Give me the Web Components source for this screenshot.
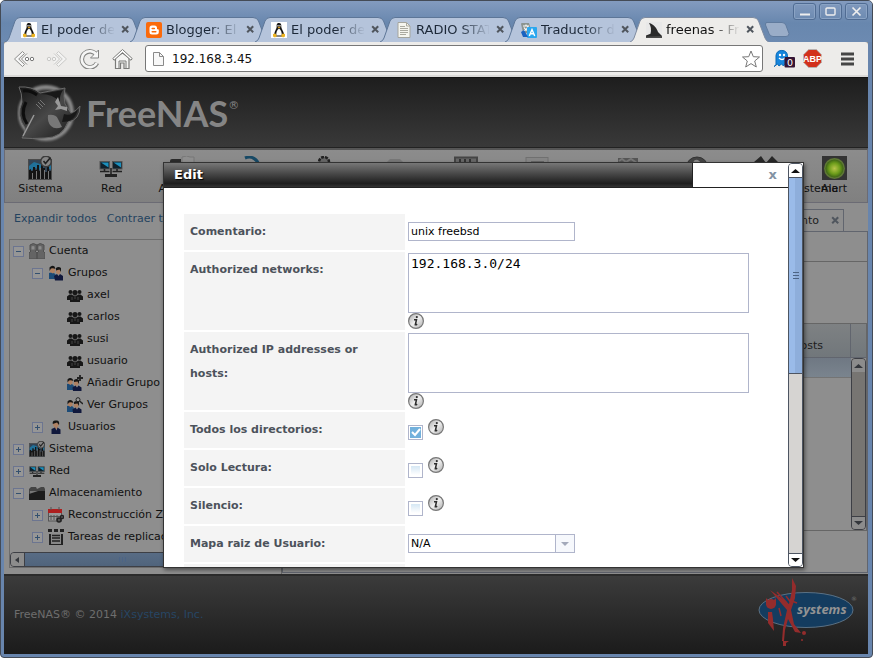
<!DOCTYPE html>
<html lang="es">
<head>
<meta charset="utf-8">
<title>freenas - FreeNAS</title>
<style>
html,body{margin:0;height:100%}
body{font:11px/14px "DejaVu Sans",sans-serif;color:#111;background:#fff}
</style>
</head>
<body>
<desktop-window></desktop-window>
<script>
const ICONS={
tux:'<rect width="16" height="16" fill="#fff"/><path d="M8 1C5.600 1 5.500 3 5.700 5 5.500 7 3.500 9 3.300 12L5 14.500h6l2-2.500C12.500 9 10.500 7 10.300 5 10.500 2.500 10 1 8 1z" fill="#151515"/><path d="M8 6.500C6 8 5 10 5.300 13.500h5.400C11 10 10 8 8 6.500z" fill="#fff"/><path d="M6.300 4.700h3.400L8 6.500z" fill="#f0a818"/><circle cx="7" cy="3.800" r=".7" fill="#fff"/><circle cx="9" cy="3.800" r=".7" fill="#fff"/><path d="M2 12l2.500-.5L6 14l-2 1.500-2-1zM14 12l-2.500-.5L10 14l2 1.500 2-1z" fill="#eeb41f"/>',
blogger:'<rect width="16" height="16" rx="2" fill="#fb6a0a"/><path d="M6 3.500h2.500a2.500 2.500 0 0 1 2.500 2.500v.7q.2.600 1 .6.800.2.800 1v1.700a2.500 2.500 0 0 1-2.500 2.500H6A2.500 2.500 0 0 1 3.500 10V6A2.500 2.500 0 0 1 6 3.500z" fill="#fff"/><path d="M6.200 6.400h2.200M6.200 9.700h3.600" stroke="#fb6a0a" stroke-width="1.500" stroke-linecap="round"/>',
doc:'<path d="M2 .5h8.500L14 4v11.500H2z" fill="#f5f5ee" stroke="#a5a59d"/><path d="M10.500.5V4H14M4 4.500h5M4 6.500h8M4 8.500h8M4 10.500h8M4 12.500h6" fill="none" stroke="#aaa99f"/>',
translate:'<path d="M0 2q0-1 1-1h7l3 10H2z" fill="#8b9490"/><path d="M2 4h6M5 2.500V4M7 4C6.500 7 4 8.500 2.500 9M3 5.500C4 7.500 6 8.500 7.500 9" fill="none" stroke="#fff" stroke-width="1.100"/><rect x="6" y="5" width="10" height="11" rx="1" fill="#2aa7ef"/><path d="M0 10l3-2 4 7H2z" fill="#1a62c0"/><path d="M8.300 14L11 7.500l2.700 6.500M9.200 11.800h3.600" fill="none" stroke="#fff" stroke-width="1.400"/>',
fin:'<rect width="16" height="16" fill="#e8e8e8"/><path d="M3 1c5 1 8 6 9 9l4 4v2H0V13.500l4.500-1.700C5.500 8 5 4 3 1z" fill="#2a2a2a"/><path d="M0 14.500l16-.5v2H0z" fill="#484848"/>',
page:'<path d="M2.500 1.500h6l4 4v9h-10z" fill="#f8f8f8" stroke="#8a8a8a"/><path d="M8.500 1.500v4h4" fill="none" stroke="#8a8a8a"/>',
back:'<path d="M9.500 2.500L1.500 10l8 7.500 2-2L5.700 10l5.800-5.500zM14 4.500L8.500 10l5.500 5.500" fill="#f8f8f8" stroke="#8d8d8b"/><circle cx="14" cy="10" r="1.700" fill="#fff" stroke="#777"/><circle cx="19" cy="10" r="1.700" fill="#fff" stroke="#777"/>',
fwd:'<path d="M12.500 2.500l8 7.500-8 7.500-2-2 5.800-5.500-5.800-5.500zM8 4.500l5.500 5.500L8 15.500" fill="#f3f3f2" stroke="#c9c9c7"/><circle cx="8" cy="10" r="1.700" fill="#f3f3f2" stroke="#c9c9c7"/><circle cx="3" cy="10" r="1.700" fill="#f3f3f2" stroke="#c9c9c7"/>',
reload:'<path d="M17.500 6A8 8 0 1 0 18 14" fill="none" stroke="#858583" stroke-width="4.600"/><path d="M19.500 1v8h-8z" fill="#f8f8f8" stroke="#858583"/><path d="M17.500 6A8 8 0 1 0 17.800 14" fill="none" stroke="#f6f6f5" stroke-width="2.600"/>',
home:'<path d="M3.500 10v10.500h5V15h3.500v5.500h5V10L10.500 5z" fill="#f4f4f3" stroke="#7a7a78" stroke-width="1.200"/><path d="M.8 10.500L10.500 1.500 20.200 10.500 19 12.300l-8.500-7.800L2 12.300z" fill="#fff" stroke="#7a7a78"/><path d="M7 20v-7h7v7" fill="none" stroke="#7a7a78"/>',
star:'<path d="M9 1l2.300 5.700 6.200.3-4.800 4 1.600 6L9 13.600 3.700 17l1.600-6-4.800-4 6.200-.3z" fill="#fff" stroke="#777" stroke-linejoin="round"/>',
ghost:'<path d="M2 16V6.500a5.800 5.800 0 0 1 11.500 0V16l-2-1.500L9.500 17l-2-2L5 17l-1.500-2L0 17.500z" fill="#1686dd" stroke="#0869b7"/><circle cx="6" cy="6" r="1.200" fill="#fff"/><circle cx="10" cy="6" r="1.200" fill="#fff"/><path d="M5 9q3 3 6 0" fill="none" stroke="#fff" stroke-width="1.300"/><rect x="10.500" y="8" width="10.500" height="10.500" rx="1" fill="#351535"/><text x="13" y="17" font-size="9.500" fill="#fff" font-family="DejaVu Sans">0</text>',
abp:'<path d="M5.700.5h7.600l5.200 5.200v7.600l-5.200 5.200H5.700L.5 13.300V5.700z" fill="#d2301c" stroke="#b9b2b0"/><text x="9.500" y="13" text-anchor="middle" font-size="9" font-weight="700" fill="#fff" font-family="Liberation Sans">ABP</text>',
menu:'<path d="M1 2h13M1 7h13M1 12h13" stroke="#454545" stroke-width="3"/>',
min:'<path d="M6 10.500h10" stroke="#eee" stroke-width="2"/>',
max:'<rect x="6" y="4" width="9" height="7" rx="1" fill="none" stroke="#eee" stroke-width="1.400"/>',
cls:'<path d="M6.500 3.500l8 8m0-8l-8 8" stroke="#eee" stroke-width="1.700"/>',
x:'<path d="M1.200 1.200l6 6m0-6l-6 6" stroke="#50565e" stroke-width="2"/>',
chart:'<rect x=".5" y="3.500" width="23" height="20" fill="#345" stroke="#4b4b4b"/><path d="M1 10l5-4 6 2 11-4v10l-6-4-5 4-5-2-6 4z" fill="#20719a"/><path d="M1 14v9h22v-8h-2v-6h-2v7h-2v-4h-2v-4h-2v7h-2V9h-2v5H7v-3H5v4H3v-2z" fill="#141414"/><path d="M4.500 17v6M8.500 15v8M12.500 12v11M16.500 14v9M20.500 15v8" stroke="#777"/><circle cx="18" cy="5.500" r="5.300" fill="#858585" stroke="#3c3c3c" stroke-width="1.500"/><path d="M15.500 5l2 2.500 5-6" fill="none" stroke="#222" stroke-width="1.700"/>',
net:'<rect x="1" y="5.500" width="9.500" height="7.500" fill="#10212c" stroke="#555"/><rect x="13.500" y="5.500" width="9.500" height="7.500" fill="#10212c" stroke="#555"/><path d="M2 6.500h7.500v5z" fill="#1c90bd"/><path d="M14.500 6.500H22v5z" fill="#1c90bd"/><path d="M1 15.500h9.500M13.500 15.500H23M5.500 13v2M18 13v2M12 12v6" stroke="#222" stroke-width="1.600"/><rect x="6" y="18" width="12" height="3" fill="#222"/>',
folder:'<path d="M0 5q0-2 2-2h9v3l10-1v19H0z" fill="#2b2b2b"/><path d="M12 6V1q5-2 8 0h4v20H12z" fill="#8e8e8e" stroke="#777"/>',
arrow:'<path d="M4 2c7-3 13 2 14 8" fill="none" stroke="#174965" stroke-width="3"/>',
knob:'<circle cx="12" cy="6" r="5" fill="#666" stroke="#222" stroke-width="2.500" stroke-dasharray="3 1"/>',
pale:'<path d="M4 6l3-3h10l3 3v10H4z" fill="#777"/>',
jail:'<path d="M1 1.500h22V24H1z" fill="#666" stroke="#444" stroke-width="2"/><path d="M6 3v20M11 3v20M16 3v20" stroke="#333" stroke-width="2"/>',
sheet:'<rect x="1" y="1.500" width="22" height="20" fill="#858585" stroke="#707070"/><path d="M6 7h13" stroke="#666" stroke-width="4"/>',
checks:'<path d="M2 2h20v20H2z" fill="#555"/><path d="M3 5l3-2 4 3 5-3 6 4" stroke="#777" fill="none" stroke-width="2"/>',
help:'<circle cx="12" cy="12" r="11" fill="#444" stroke="#333"/><path d="M9 6q4-3 6 2" fill="none" stroke="#888" stroke-width="2"/>',
tools:'<path d="M0 6l7-6 5 7 6-7 6 6-6 9H5z" fill="#282828"/>',
alert:'<defs><radialGradient id="g"><stop stop-color="#b7c44a"/><stop offset=".6" stop-color="#6e9e1b"/><stop offset="1" stop-color="#3c6315"/></radialGradient></defs><rect width="25" height="24" fill="#333"/><circle cx="12.500" cy="12.500" r="10.500" fill="#5e7735"/><circle cx="12.500" cy="12.500" r="9" fill="url(#g)"/>',
pair:'<path d="M1 2q3-3 7 0v5l-2 1 2 2v6H0v-6l2-2-1-1zM8 2q3-3 7 0v5l-1 1 2 2v6H8v-6l2-2-2-1z" fill="#646464" stroke="#505050"/><path d="M2.500 3.500q1.500-1 3 0v3h-3zM9.500 3.500q1.500-1 3 0v3h-3z" fill="#8c8c8c"/>',
duo:'<path d="M1 8l4-1 3 3v4H1z" fill="#1c4b77"/><path d="M2 3q2-2 5 0v4l-2 1.500L2 7zM8 4q2-2 4.500 0v4l-2 1.500L8 8z" fill="#ae8163"/><path d="M1.500 6V2.500Q4-.5 6.500 1.500L7.500 4Q5.500 3 3 3.500zM8 5.500V3Q10.500 1 13 3v4L11.500 4.500z" fill="#151515"/><path d="M6 11l3-2 1.500 2L12 9l3 2v4.500H7z" fill="#10183c"/>',
group:'<circle cx="3.500" cy="5" r="2" fill="#171717"/><circle cx="12.500" cy="5" r="2" fill="#171717"/><circle cx="8" cy="5.500" r="2.600" fill="#171717"/><path d="M0 13V9.500l2.500-2H5l1 1h4l1-1h2.500l2.500 2V13h-3v2H3v-2z" fill="#171717"/><path d="M5 10v3M11 10v3M8 9v3" stroke="#444"/>',
plus:'<path d="M0 9l4-1 3 3v4H0z" fill="#1c4b77"/><path d="M1 5q2-2 4.500 0v3.500L3.500 10 1 8.500zM7 6q2-2 4.500 0v3.500L9.500 11 7 9.500z" fill="#ae8163"/><path d="M.5 7.500V4.500Q3 2 5.500 4l1 2Q4 5 2 5.500zM7 7V5Q9.500 3 12 5v4l-1.500-2.500z" fill="#151515"/><path d="M5.500 12.500l3-2 1.500 2 1.500-2 3 2V16H6z" fill="#10183c"/><path d="M13 0v6M10 3h6" stroke="#222" stroke-width="1.800"/>',
find:'<path d="M0 9l4-1 3 3v4H0z" fill="#1c4b77"/><path d="M1 5q2-2 4.500 0v3.500L3.500 10 1 8.500zM7 6q2-2 4.500 0v3.500L9.500 11 7 9.500z" fill="#ae8163"/><path d="M.5 7.500V4.500Q3 2 5.500 4l1 2Q4 5 2 5.500zM7 7V5Q9.500 3 12 5v4l-1.500-2.500z" fill="#151515"/><path d="M5.500 12.500l3-2 1.500 2 1.500-2 3 2V16H6z" fill="#10183c"/><circle cx="11" cy="2.700" r="2" fill="#999" stroke="#222"/><path d="M12.500 4L16 7" stroke="#222" stroke-width="1.500"/>',
user:'<circle cx="8" cy="5" r="3" fill="#ae8163"/><path d="M4.800 5Q4 1 8 1.500 12 1 11 6L9 3.500z" fill="#151515"/><path d="M6.500 7h3v3h-3z" fill="#ad8062"/><path d="M3.500 15v-5L7 8.500l1.500 3 1-3 3 2V15z" fill="#10183c"/>',
dark:'<path d="M0 4l2-2h5l1 2 4-2h3l1 2v11H0z" fill="#444"/><path d="M1 6h14v8H1z" fill="#777"/><path d="M0 15V9l9-3h7v9z" fill="#1c1c1c"/>',
cal:'<rect x=".5" y="3" width="13" height="11" fill="#999" stroke="#555"/><path d="M0 2h14v4H0z" fill="#ad1f1f"/><path d="M3 0v3M11 0v3M3 8v5M6 8v5M9 8v5M1 9.500h12" stroke="#555"/><circle cx="11" cy="13" r="2" fill="#555" stroke="#222" stroke-width="1.500"/><circle cx="14" cy="10" r="1.600" fill="#555" stroke="#222" stroke-width="1.300"/>',
repl:'<path d="M0 0h4v3H0zM6 0h4v3H6zM12 0h4v3h-4zM1 5h2v10h10V5h2v11H1z" fill="#222"/><path d="M3 5h10v10H3z" fill="#888"/><path d="M4 6.500h8M4 9h8M4 12h8" stroke="#222" stroke-width="1.500"/>',
cap:'<path d="M7 4q2-4 5 0z" fill="#333"/>',
info:'<defs><linearGradient id="i" x2="1" y2="1"><stop stop-color="#aaa"/><stop offset=".5" stop-color="#eee"/><stop offset="1" stop-color="#aaa"/></linearGradient></defs><circle cx="8" cy="8" r="7.400" fill="url(#i)" stroke="#777" stroke-width="1.200"/><path d="M6 6.800h2.500L7.300 11.800q.8.300 1.800-.7" fill="none" stroke="#2c2c2c" stroke-width="1.500"/><circle cx="8.800" cy="4.100" r="1.100" fill="#2c2c2c"/>'
};
const define=(name,html)=>customElements.define(name,class extends HTMLElement{
  connectedCallback(){
    if(this.shadowRoot)return;
    const root=this.attachShadow({mode:'open'});
    const t=document.createElement('template');
    t.innerHTML='<style>*{box-sizing:border-box}button,a,input,textarea,select{font:inherit;color:inherit}button{border:0;padding:0;background:none}</style>'+(typeof html==='function'?html(this):html);
    root.append(t.content.cloneNode(true));
  }
});
const attr=(e,n,d='')=>e.getAttribute(n)??d;

define('ui-icon',e=>{const w=attr(e,'w','16'),h=attr(e,'h',w);
  return `<style>:host{display:block;flex:none;width:${w}px;height:${h}px}svg{display:block}</style><svg width="${w}" height="${h}" viewBox="${attr(e,'box',`0 0 ${w} ${h}`)}" aria-hidden="true">${ICONS[attr(e,'name')]}</svg>`});

define('window-buttons',`<style>:host{display:flex;gap:3px}
button{width:23px;height:17px;border:1px solid #506c93;border-radius:3px;box-shadow:inset 0 0 0 1px #8aa3c4}</style>
<button aria-label="Minimizar"><ui-icon name="min" w="21" h="15"></ui-icon></button><button aria-label="Maximizar"><ui-icon name="max" w="21" h="15"></ui-icon></button><button aria-label="Cerrar"><ui-icon name="cls" w="21" h="15"></ui-icon></button>`);

define('browser-tab',e=>{const on=e.hasAttribute('active');return `<style>
:host{display:flex;position:relative;flex:0 1 125px;min-width:0;height:25px;align-items:center;gap:4px;padding-left:16px;box-sizing:border-box;z-index:${on?2:1};font-size:13px;line-height:16px;color:${on?'#111':'#1c2838'}}
.shape{position:absolute;inset:0 -14px 0 0;width:139px;height:25px;z-index:-1}
span{flex:1;min-width:0;white-space:nowrap;overflow:hidden;mask-image:linear-gradient(90deg,#000 60%,transparent 102%)}
button{flex:none;margin-left:3px}</style>
<svg class="shape" viewBox="0 0 139 25"><path d="M0 25Q3 24 4 21L10 4Q11.500.5 15 .5H123Q127 .5 128.500 4L135 21Q136 24 139 25z" fill="${on?'#edecea':'#b5c4db'}"/><path d="M0 25Q3 24 4 21L10 4Q11.500.5 15 .5H123Q127 .5 128.500 4L135 21Q136 24 139 25" fill="none" stroke="${on?'#7e8ba0':'#5d7697'}"/></svg>
<ui-icon name="${attr(e,'icon')}"></ui-icon><span><slot></slot></span><button aria-label="Cerrar pestaña"><ui-icon name="x" w="9"></ui-icon></button>`});

define('tab-strip',`<style>:host{display:block;padding-top:3px;background:linear-gradient(#839bbf,#6887ae 22px,#6c8ab1)}
window-buttons{position:absolute;top:2px;right:4px}
nav{display:flex;align-items:flex-end;padding:13px 70px 0 4px}
.new{flex:none;align-self:center;width:26px;height:15px;margin-left:9px}.new svg{display:block}</style>
<window-buttons></window-buttons>
<nav aria-label="Pestañas"><browser-tab icon="tux">El poder de</browser-tab><browser-tab icon="blogger">Blogger: El</browser-tab><browser-tab icon="tux">El poder de</browser-tab><browser-tab icon="doc">RADIO STAT</browser-tab><browser-tab icon="translate">Traductor d</browser-tab><browser-tab icon="fin" active>freenas - Fr</browser-tab><button class="new" aria-label="Nueva pestaña"><svg width="26" height="15"><path d="M2 .5h16q3 0 4 3l3 8q0 3-3 3H9q-3 0-4-3L1.500 3Q1 .5 3 .5z" fill="#9aadc8" stroke="#607b9e"/></svg></button></nav>`);

define('browser-toolbar',`<style>:host{display:flex;align-items:center;height:35px;padding:0 13px 0 9px;background:#edecea;border-bottom:2px solid #dbdad8;border-radius:3px 3px 0 0}
.b{margin-right:11px}
.omni{flex:1;display:flex;align-items:center;gap:5px;min-width:0;height:27px;border:1px solid #777;border-radius:3px;background:#fff;padding:0 2px 0 5px}
input{flex:1;min-width:0;border:0;outline:0;padding:0;font-size:12px;line-height:18px;background:none}
.g{margin:0 8px 0 11px}.m{margin-left:18px}</style>
<button class="b" aria-label="Atrás"><ui-icon name="back" w="22" h="20"></ui-icon></button><button class="b" aria-label="Adelante"><ui-icon name="fwd" w="22" h="20"></ui-icon></button><button class="b" aria-label="Recargar"><ui-icon name="reload" w="22" h="20"></ui-icon></button><button class="b" aria-label="Inicio"><ui-icon name="home" w="22" h="22"></ui-icon></button>
<div class="omni"><ui-icon name="page"></ui-icon><input aria-label="Dirección" value="192.168.3.45"><button aria-label="Marcador"><ui-icon name="star" w="18"></ui-icon></button></div>
<button class="g" aria-label="Ghostery"><ui-icon name="ghost" w="21" h="19"></ui-icon></button><button aria-label="Adblock"><ui-icon name="abp" w="19"></ui-icon></button><button class="m" aria-label="Menú"><ui-icon name="menu" w="15" h="14"></ui-icon></button>`);

define('brand-header',`<style>:host{display:flex;align-items:center;gap:5px;height:71px;padding-left:13px;background:linear-gradient(#1e1e1e,#393939);border-top:1px solid #111;border-bottom:1px solid #222}
b{font:700 36px/44px Lato,sans-serif;color:#858585}sup{font:11px/12px "DejaVu Sans",sans-serif;color:#858585;vertical-align:18px}svg{flex:none;align-self:flex-start;margin-top:4px}</style>
<svg width="64" height="62" viewBox="0 0 64 62" aria-hidden="true"><defs><filter id="s"><feGaussianBlur stdDeviation="1"/></filter><linearGradient id="d" x2="1" y2="1"><stop stop-color="#161616"/><stop offset=".5" stop-color="#484848"/><stop offset="1" stop-color="#151515"/></linearGradient></defs>
<circle cx="29" cy="31" r="26" fill="#333" stroke="#8a8a8a" stroke-width="4" filter="url(#s)"/>
<path d="M2 5Q15 4 23 11L48 6Q46 14 48 22L54 31Q60 29 63 24 63 38 51 40 45 56 28 56 14 57 5 56 9 51 8 46-1 34 5 20 5 11 2 5z" fill="url(#d)" stroke="#6a6a6a"/>
<path d="M6 9Q13 8 20 13M9 20Q3 32 10 42" fill="none" stroke="#0d0d0d" stroke-width="3"/>
<path d="M24 12L46 8Q42 14 43 20 36 12 24 12z" fill="#181818"/><path d="M61 27Q54 35 47 32L45 40Q58 40 61 27z" fill="#181818"/>
<path d="M41 15l3 9 6 1 0 4-6-2-6 1 3-4-3-4z" fill="#999"/><path d="M31 33q8-1 10 4l4 8q-7 3-11-1-4-4-3-11z" fill="#777"/><path d="M19 22l5 5M21 20l5 5M23 18l5 5" stroke="#777"/><path d="M6 54L17 33" stroke="#999" stroke-width="1.500"/></svg><b>FreeNAS<sup>®</sup></b>`);

define('menu-item',e=>`<style>:host{display:block;flex:0 0 71px;min-width:0}button{display:flex;flex-direction:column;align-items:center;gap:1px;width:100%;font-size:11px;line-height:14px;white-space:nowrap}</style><button><ui-icon name="${attr(e,'icon')}" w="25" h="25"></ui-icon><slot></slot></button>`);
define('main-menu',`<style>:host{display:flex;justify-content:space-between;height:55px;padding:6px 0 0;border:1px solid #6b6b74;border-top:2px solid #555;background:linear-gradient(#8c8c8c,#808080)}
div{display:flex;min-width:0}.r menu-item{flex-basis:69px}.r menu-item:last-child{flex-basis:66px}</style>
<div><menu-item icon="chart">Sistema</menu-item><menu-item icon="net">Red</menu-item><menu-item icon="folder">Almacén</menu-item><menu-item icon="arrow"></menu-item><menu-item icon="knob"></menu-item><menu-item icon="pale"></menu-item><menu-item icon="jail"></menu-item><menu-item icon="sheet"></menu-item></div>
<div class="r"><menu-item icon="checks"></menu-item><menu-item icon="help"></menu-item><menu-item icon="tools">Apagar/Salida del sistema</menu-item><menu-item icon="alert">Alert</menu-item></div>`);

define('scroll-bar',e=>{const h=e.hasAttribute('horizontal'),dim=e.hasAttribute('dim'),thumb=attr(e,'thumb','0');
const line=dim?'#3d3f45':'#4d5562',fill=dim?'#8c8c8c':'#fff',ar=dim?'#34373c':'#111';
const tri=d=>`<svg width="9" height="6"><path d="${d}" fill="${ar}"/></svg>`;
const th=thumb==='0'?'':`<i></i>`;
return `<style>:host{display:flex;flex:none;flex-direction:${h?'row':'column'};${h?'height':'width'}:15px;border:1px solid ${line};border-radius:4px;background:${dim?'#777572':'#d6d4d2'};overflow:hidden}
button{flex:none;width:13px;height:13px;display:grid;place-items:center;background:${fill}}
i{flex:0 1 ${thumb}%;border:0 solid ${line};border-width:${h?'0 1px':'1px 0'};background:${dim?'linear-gradient(#586c85,#50647c)':'linear-gradient(90deg,#9abbe9 50%,#8eaedb 50%)'};display:grid;place-items:center}
i:before{content:"";width:${h?8:6}px;height:${h?5:8}px;background:repeating-linear-gradient(${h?90:0}deg,#4c6486 0 1px,transparent 1px 3px)}
s{flex:1 1 0}.e{border:0 solid ${line};border-${h?'left':'top'}-width:1px}</style>
<button aria-label="Anterior">${tri(h?'M6 0v6L2 3z':'M0 5h9L4.500 1z')}</button>${th}<s></s><button class="e" aria-label="Siguiente">${tri(h?'M3 0v6l4-3z':'M0 1h9L4.500 5z')}</button>`});

define('tree-row',e=>{const st=attr(e,'state'),ic=attr(e,'icon'),big=ic==='chart'||ic==='net';return `<style>:host{display:flex;align-items:center;height:22px;padding-left:${3+19*+attr(e,'level','0')}px;white-space:nowrap;font-size:11px;line-height:14px}
.x{width:11px;height:11px;margin-right:5px;display:grid;place-items:center}.x svg{display:block}ui-icon{margin-right:4px}</style>
${st?`<button class="x" aria-label="Alternar"><svg width="11" height="11"><rect x=".5" y=".5" width="10" height="10" fill="#969696" stroke="#6c7590"/><path d="M3 5.500h5${st==='+'?'M5.500 3v5':''}" stroke="#33506f"/></svg></button>`:'<div class="x"></div>'}<ui-icon name="${ic}"${big?' box="0 0 24 24"':''}></ui-icon><slot></slot>`});

define('side-tree',`<style>:host{display:flex;flex-direction:column;flex:0 0 278px;min-width:0;padding:0 3px 6px 5px;border-right:1px solid #666}
nav{display:flex;gap:10px;padding:9px 5px 13px}a{color:#24435f;text-decoration:none;white-space:nowrap}
.box{flex:1;min-height:0;border:1px solid #6d6d6d;display:flex;flex-direction:column}.rows{flex:1 1 0;min-height:0;overflow:hidden}</style>
<nav><a href="#">Expandir todos</a><a href="#">Contraer todos</a></nav>
<div class="box"><div class="rows"><tree-row state="-" icon="pair">Cuenta</tree-row><tree-row level="1" state="-" icon="duo">Grupos</tree-row><tree-row level="2" icon="group">axel</tree-row><tree-row level="2" icon="group">carlos</tree-row><tree-row level="2" icon="group">susi</tree-row><tree-row level="2" icon="group">usuario</tree-row><tree-row level="2" icon="plus">Añadir Grupo</tree-row><tree-row level="2" icon="find">Ver Grupos</tree-row><tree-row level="1" state="+" icon="user">Usuarios</tree-row><tree-row state="+" icon="chart">Sistema</tree-row><tree-row state="+" icon="net">Red</tree-row><tree-row state="-" icon="dark">Almacenamiento</tree-row><tree-row level="1" state="+" icon="cal">Reconstrucción ZFS</tree-row><tree-row level="1" state="+" icon="repl">Tareas de replicación</tree-row><tree-row level="1" icon="cap"></tree-row></div>
<scroll-bar horizontal dim thumb="75"></scroll-bar></div>`);

define('work-pane',`<style>:host{display:flex;flex-direction:column;flex:1;min-width:0;color:#1d1d1d}
.tabs{display:flex;justify-content:flex-end;padding:6px 24px 0 0}.tab{display:flex;align-items:center;gap:12px;height:22px;padding:0 3px 0 10px;border:1px solid #61656e;border-bottom:0}
.body{flex:1;display:flex;flex-direction:column;border:1px solid #61656e;margin-bottom:1px;padding-bottom:41px}.bar{height:30px;border-bottom:1px solid #666}
.grid{flex:1;margin-top:61px;display:flex;flex-direction:column;border:1px solid #666}.head{display:flex;height:34px;background:linear-gradient(#7e8183,#71777b);border-bottom:1px solid #61656e}
.head span{flex:1;text-align:right;padding:15px 27px 0 0;border-right:1px solid #61656e}.head em{width:15px}
.rows{flex:1;display:flex}.row{flex:1;height:20px;background:linear-gradient(#6f7883,#7a848e);border-bottom:1px solid #747474}</style>
<div class="tabs"><div class="tab">Almacenamiento<button aria-label="Cerrar"><ui-icon name="x" w="9"></ui-icon></button></div></div>
<div class="body"><div class="bar"></div><div class="grid"><div class="head"><span>Authorized hosts</span><em></em></div><div class="rows"><div class="row"></div><scroll-bar dim></scroll-bar></div></div></div>`);

define('page-footer',`<style>:host{display:flex;align-items:center;justify-content:space-between;height:80px;padding:0 11px 0 10px;border-top:2px solid #2b2b2b;background:linear-gradient(#3b3b3b,#1b1b1b);color:#6e6e6e}a{color:#274664;text-decoration:none}svg{align-self:flex-start;margin-top:1px}</style>
<span>FreeNAS® © 2014 <a href="#">iXsystems, Inc.</a></span>
<svg width="100" height="72" viewBox="0 0 100 72" role="img" aria-label="iXsystems"><ellipse cx="49" cy="33" rx="47" ry="17.500" fill="#143c5f" stroke="#5b7184"/><text x="40" y="37" font-family="Open Sans" font-weight="700" font-style="italic" font-size="13" fill="#939393">systems</text><g fill="#942c2c"><circle cx="14" cy="27" r="5"/><path d="M9 21l3 3h4l3-3v7H9zM11 35h4l1 7 1 12-6-8zM35 1l4 8-1 12-4 12 3 14 7 9-6-1-7-13-3 11-1 11h-2l1-13 4-18L13 13l10 7 9 7 3-14z"/><path d="M26 64h6l-3 2v3h-3z"/><circle cx="47" cy="56" r="2"/><circle cx="45" cy="63" r="1"/></g><path d="M20 15l10 11M29 19l6 8M32 23l8 3M22 31l2 8" stroke="#942c2c" stroke-width="1.500"/><text x="94" y="24" font-size="6" fill="#777">®</text></svg>`);

define('info-button',`<style>:host{display:block;width:16px;height:16px}button{display:block}</style><button aria-label="Información"><ui-icon name="info"></ui-icon></button>`);

define('edit-form',`<style>:host{display:block}
table{border-spacing:2px;border-collapse:separate;width:100%;table-layout:fixed}col.l{width:221px}
th{background:#f4f4f4;color:#4c525b;text-align:left;vertical-align:top;font-weight:700;font-size:11px;line-height:24px;padding:6px}td{padding:1px;vertical-align:top}
input[type=text]{display:block;width:167px;height:19px;margin-top:7px;border:1px solid #b0b5cb;padding:0 2px;outline:0}
textarea{display:block;width:100%;max-width:341px;height:60px;border:1px solid #b0b5cb;padding:1px 2px;resize:none;font:13px/18px "DejaVu Sans Mono",monospace}
.c{display:flex;gap:5px;padding-top:6px}input[type=checkbox]{appearance:none;width:15px;height:15px;margin:6px 0 0;border:1px solid #b0b5cb;background:linear-gradient(#d5e7f4,#fff) content-box;padding:2px}
input:checked{background:url("data:image/svg+xml,%3Csvg xmlns='http://www.w3.org/2000/svg' viewBox='0 0 13 13'%3E%3Crect x='1' y='1' width='11' height='11' fill='%2373b1dc'/%3E%3Cpath d='M3 6l3 3 5-6' fill='none' stroke='white' stroke-width='2'/%3E%3C/svg%3E") center/13px}
.s{position:relative;width:167px;margin-top:7px}select{display:block;appearance:none;width:100%;height:19px;border:1px solid #b0b5cb;border-radius:0;padding:0 2px;background:#fff}
.s svg{position:absolute;right:1px;top:1px;pointer-events:none}</style>
<table><colgroup><col class="l"><col></colgroup>
<tr><th scope="row"><label for="a">Comentario:</label></th><td><input type="text" id="a" value="unix freebsd"></td></tr>
<tr><th scope="row"><label for="b">Authorized networks:</label></th><td><textarea id="b">192.168.3.0/24</textarea><info-button></info-button></td></tr>
<tr><th scope="row"><label for="c">Authorized IP addresses or hosts:</label></th><td><textarea id="c"></textarea><info-button></info-button></td></tr>
<tr><th scope="row"><label for="d">Todos los directorios:</label></th><td><div class="c"><input type="checkbox" id="d" checked><info-button></info-button></div></td></tr>
<tr><th scope="row"><label for="e">Solo Lectura:</label></th><td><div class="c"><input type="checkbox" id="e"><info-button></info-button></div></td></tr>
<tr><th scope="row"><label for="f">Silencio:</label></th><td><div class="c"><input type="checkbox" id="f"><info-button></info-button></div></td></tr>
<tr><th scope="row"><label for="g">Mapa raiz de Usuario:</label></th><td><div class="s"><select id="g"><option>N/A</option></select><svg width="19" height="17"><rect width="19" height="17" fill="#f6f8fc"/><path d="M.5 0v17" stroke="#b0b5cb"/><path d="M6 7h8l-4 4z" fill="#a3a9ba"/></svg></div></td></tr>
<tr><th>&nbsp;</th><td></td></tr></table>`);

define('edit-dialog',`<style>:host{display:flex;border:1px solid #333;background:#fff;box-shadow:1px 2px 4px #0007;color:#000}
.main{flex:1;min-width:0;display:flex;flex-direction:column;overflow:hidden}
header{flex:none;display:flex;height:25px;border-bottom:1px solid #222}h2{flex:1;margin:0;padding:0 10px;font-size:13px;line-height:23px;color:#fff;text-shadow:1px 1px 1px #000;background:linear-gradient(#777,#1e1e1e 85%,#333);border-right:1px solid #222}
.close{width:95px;display:flex;justify-content:flex-end;align-items:center;padding-right:11px;color:#8393a4;font:700 13px/16px "DejaVu Sans",sans-serif}
.scroll{flex:1 1 0;min-height:0;overflow:hidden;padding:24px 36px 0 18px}</style>
<div class="main"><header><h2>Edit</h2><button class="close" aria-label="Cerrar">x</button></header><div class="scroll"><edit-form></edit-form></div></div><scroll-bar thumb="49"></scroll-bar>`);

define('desktop-window',`<style>:host{display:block;min-height:100vh;position:relative}
.w{position:relative;display:flex;flex-direction:column;min-height:100vh;border:1px solid #444b56;border-radius:5px 5px 4px 4px;background:#6885ad;overflow:hidden}
.v{flex:1;margin:0 4px 3px 3px;display:flex;flex-direction:column;background:#8e8e8e;position:relative}
.content{flex:1;display:flex;min-height:0}
edit-dialog{position:absolute;left:159px;right:64px;top:120px;bottom:86px;z-index:3}</style>
<div class="w" role="application"><tab-strip></tab-strip><div class="v"><browser-toolbar></browser-toolbar><brand-header></brand-header><main-menu></main-menu><div class="content"><side-tree></side-tree><work-pane></work-pane></div><page-footer></page-footer><edit-dialog></edit-dialog></div></div>`);
</script>
</body>
</html>
